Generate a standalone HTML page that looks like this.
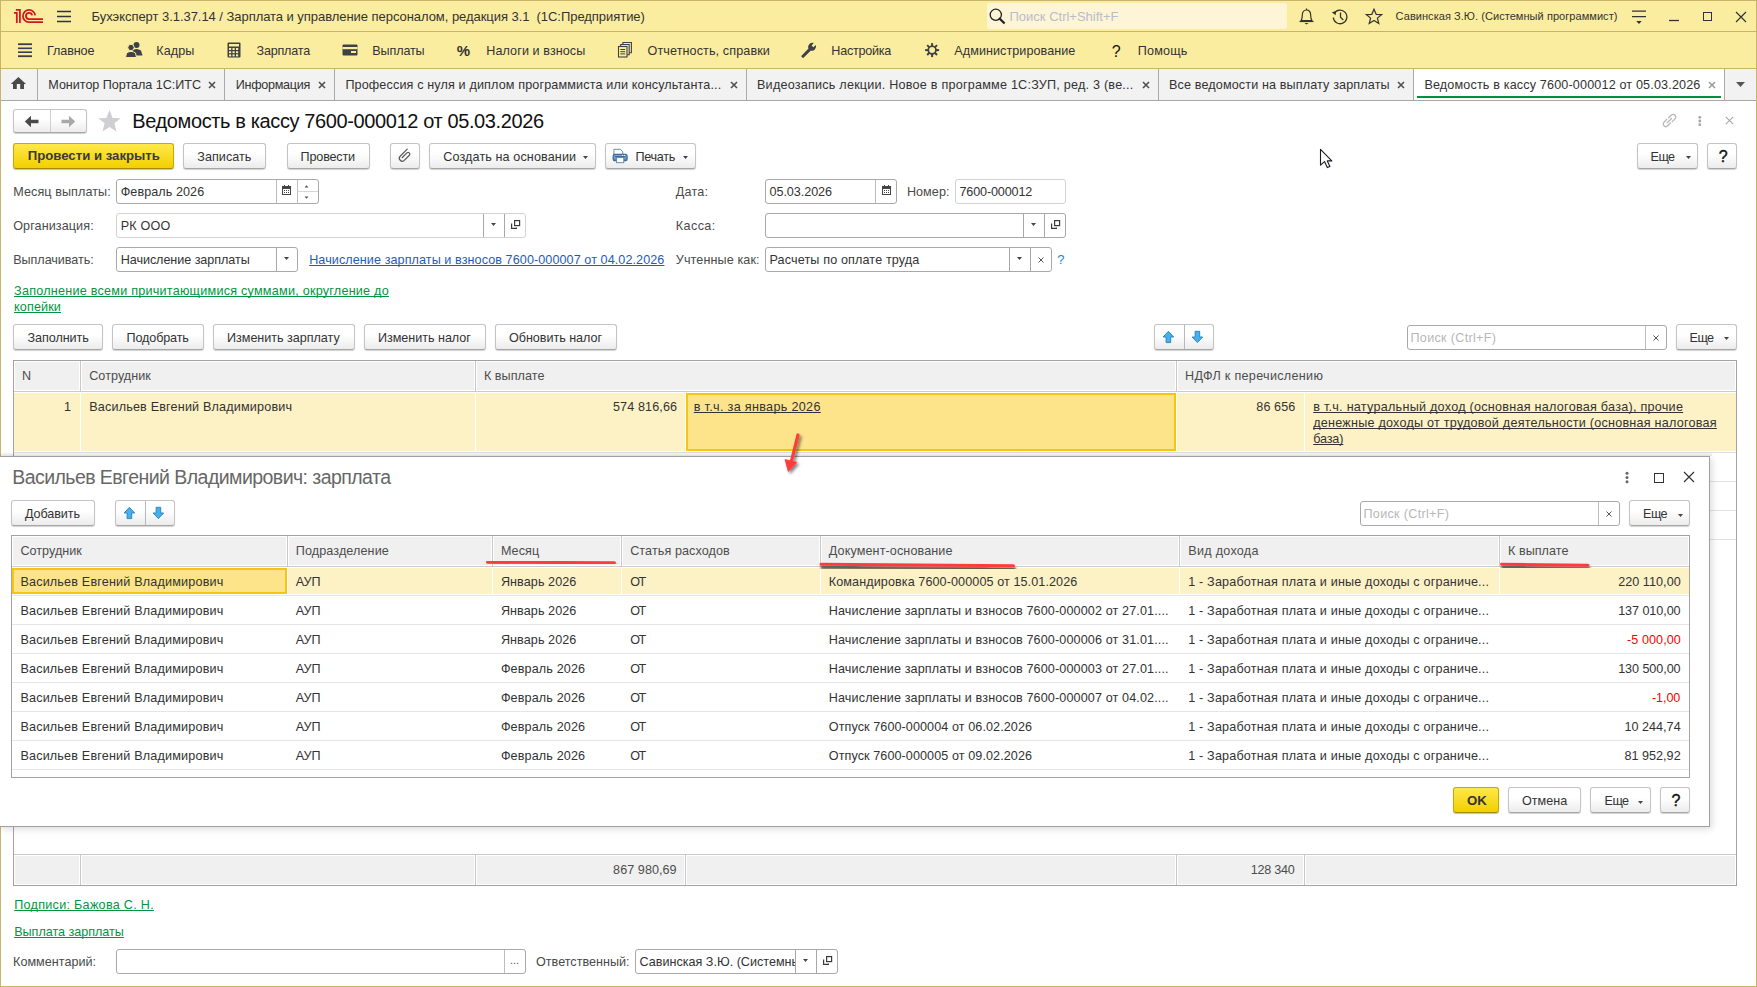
<!DOCTYPE html><html><head><meta charset="utf-8"><style>
html,body{margin:0;padding:0;width:1757px;height:987px;overflow:hidden;background:#fff;position:relative;font-family:"Liberation Sans",sans-serif;}
.a{position:absolute;display:block}
.t{position:absolute;white-space:pre;font-family:"Liberation Sans",sans-serif;}
</style></head><body>
<div class="a" style="left:0px;top:0px;width:1757px;height:32px;background:#fbeda0;"></div>
<div class="a" style="left:0px;top:32px;width:1757px;height:37px;background:#fbeda0;"></div>
<div class="a" style="left:0px;top:31px;width:1757px;height:1px;background:#c8b56b;"></div>
<div class="a" style="left:0px;top:68px;width:1757px;height:1px;background:#c8b56b;"></div>
<div class="a" style="left:0px;top:69px;width:1757px;height:31px;background:#f2f2f2;"></div>
<div class="a" style="left:0px;top:100px;width:1757px;height:1px;background:#a8a8a8;"></div>
<svg class="a" style="left:10px;top:5px;" width="36" height="22" viewBox="0 0 36 22"><g fill="none" stroke="#d5141c" stroke-width="1.75"><path d="M4 7.9H6.8V17.9"/><path d="M5.9 4.9H9.9V17.9"/><path d="M25.1 10.4A6.1 6.1 0 1 0 18.9 17.1H33"/><path d="M22.1 10.4A3.1 3.1 0 1 0 18.9 14.1H33"/></g></svg>
<svg class="a" style="left:57px;top:10px;" width="15" height="13" viewBox="0 0 15 13"><g stroke="#333" stroke-width="1.3"><path d="M0 1.5H14M0 6.5H14M0 11.5H14"/></g></svg>
<div class="t " style="left:91.50px;top:8.50px;font-size:13px;line-height:16px;color:#333;letter-spacing:-0.047px;">Бухэксперт 3.1.37.14 / Зарплата и управление персоналом, редакция 3.1  (1С:Предприятие)</div>
<div class="a" style="left:987px;top:3px;width:300px;height:26px;background:#fdf5d5;border-radius:3px;"></div>
<svg class="a" style="left:989px;top:8px;" width="17" height="17" viewBox="0 0 17 17"><circle cx="6.8" cy="6.8" r="5.6" fill="none" stroke="#222" stroke-width="1.3"/><path d="M10.8 10.8L14.8 14.8" stroke="#222" stroke-width="2.2" stroke-linecap="square"/></svg>
<div class="t " style="left:1009.50px;top:8.50px;font-size:13px;line-height:16px;color:#b9bccb;">Поиск Ctrl+Shift+F</div>
<svg class="a" style="left:1298px;top:8px;" width="17" height="17" viewBox="0 0 17 17"><path d="M3 12.5C4.2 11 4.3 9.5 4.3 7.3 4.3 4.2 6 2 8.5 2S12.7 4.2 12.7 7.3C12.7 9.5 12.8 11 14 12.5Z" fill="none" stroke="#333" stroke-width="1.2" stroke-linejoin="round"/><path d="M1.5 13.5H15.5" stroke="#333" stroke-width="1.2"/><path d="M6.5 15H10.5L8.5 16.5Z" fill="#333"/><path d="M8.5 0.5V2" stroke="#333" stroke-width="1.2"/></svg>
<svg class="a" style="left:1331px;top:8px;" width="18" height="17" viewBox="0 0 18 17"><path d="M3.2 5.5A6.8 6.8 0 1 1 2.3 9.5" fill="none" stroke="#333" stroke-width="1.3"/><path d="M0.8 4.2L4.6 7.2L5.2 3Z" fill="#333"/><path d="M9.5 4.5V9.3L12.3 12" fill="none" stroke="#333" stroke-width="1.3"/></svg>
<svg class="a" style="left:1365px;top:8px;" width="18" height="17" viewBox="0 0 18 17"><path d="M9 1.2L11.2 6.3L16.6 6.6L12.4 10.1L13.8 15.5L9 12.5L4.2 15.5L5.6 10.1L1.4 6.6L6.8 6.3Z" fill="none" stroke="#333" stroke-width="1.2" stroke-linejoin="miter"/></svg>
<div class="t " style="left:1395.60px;top:9.19px;font-size:11px;line-height:14px;color:#333;letter-spacing:0.054px;">Савинская З.Ю. (Системный программист)</div>
<svg class="a" style="left:1631px;top:10px;" width="16" height="15" viewBox="0 0 16 15"><path d="M1 1.2H15M1 6.6H15" stroke="#333" stroke-width="1.2"/><path d="M5.3 11H10.7L8 14Z" fill="#333"/></svg>
<svg class="a" style="left:1668px;top:17px;" width="12" height="6" viewBox="0 0 12 6"><path d="M1 3.5H11" stroke="#333" stroke-width="1.3"/></svg>
<div class="a" style="left:1703px;top:12px;width:9px;height:9px;border:1.2px solid #333;box-sizing:border-box;"></div>
<svg class="a" style="left:1735px;top:11px;" width="12" height="12" viewBox="0 0 12 12"><path d="M1 1L11 11M11 1L1 11" stroke="#333" stroke-width="1.2"/></svg>
<svg class="a" style="left:17px;top:42px;" width="16" height="16" viewBox="0 0 16 16"><g fill="#3b4048"><rect x="1" y="1.3" width="14" height="1.8"/><rect x="1" y="5.5" width="14" height="1.6"/><rect x="1" y="9.4" width="14" height="1.6"/><rect x="1" y="13.3" width="14" height="1.8"/></g></svg>
<div class="t " style="left:47.00px;top:42.63px;font-size:12.6px;line-height:16px;color:#333;letter-spacing:-0.100px;">Главное</div>
<svg class="a" style="left:125px;top:41px;" width="19" height="17" viewBox="0 0 19 17"><g fill="#3e4147"><circle cx="11.5" cy="4" r="3"/><path d="M7 9.5Q11.5 6.5 16 9.5L17.5 14.5H8Z"/><circle cx="6" cy="6.5" r="3.2" stroke="#fbeda0" stroke-width="1"/><path d="M0.5 16.5L1.5 12Q6 8.8 10.5 12L11.5 16.5Z" stroke="#fbeda0" stroke-width="1"/></g></svg>
<div class="t " style="left:156.30px;top:42.63px;font-size:12.6px;line-height:16px;color:#333;letter-spacing:0.050px;">Кадры</div>
<svg class="a" style="left:227px;top:42px;" width="14" height="16" viewBox="0 0 14 16"><rect x="0.5" y="0.5" width="13" height="15" rx="1" fill="#3e4147"/><rect x="2" y="2" width="10" height="2.5" fill="#fbeda0"/><rect x="2.0" y="6.0" width="2.2" height="2" fill="#fbeda0"/><rect x="2.0" y="9.2" width="2.2" height="2" fill="#fbeda0"/><rect x="2.0" y="12.4" width="2.2" height="2" fill="#fbeda0"/><rect x="5.5" y="6.0" width="2.2" height="2" fill="#fbeda0"/><rect x="5.5" y="9.2" width="2.2" height="2" fill="#fbeda0"/><rect x="5.5" y="12.4" width="2.2" height="2" fill="#fbeda0"/><rect x="9.0" y="6.0" width="2.2" height="2" fill="#fbeda0"/><rect x="9.0" y="9.2" width="2.2" height="2" fill="#fbeda0"/><rect x="9.0" y="12.4" width="2.2" height="2" fill="#fbeda0"/></svg>
<div class="t " style="left:256.50px;top:42.63px;font-size:12.6px;line-height:16px;color:#333;letter-spacing:-0.214px;">Зарплата</div>
<svg class="a" style="left:342px;top:44px;" width="16" height="12" viewBox="0 0 16 12"><rect x="0.5" y="0.5" width="15" height="11" rx="1" fill="#3e4147"/><rect x="0.5" y="3" width="15" height="2.2" fill="#fbeda0"/><rect x="9" y="7" width="5" height="2" fill="#fbeda0"/></svg>
<div class="t " style="left:372.30px;top:42.63px;font-size:12.6px;line-height:16px;color:#333;letter-spacing:-0.133px;">Выплаты</div>
<div class="t " style="left:456.80px;top:40.80px;font-size:15px;line-height:19px;color:#333;font-weight:bold;">%</div>
<div class="t " style="left:486.30px;top:42.63px;font-size:12.6px;line-height:16px;color:#333;letter-spacing:0.079px;">Налоги и взносы</div>
<svg class="a" style="left:617px;top:41px;" width="16" height="17" viewBox="0 0 16 17"><g fill="none" stroke="#3e4147" stroke-width="1.1"><rect x="1.5" y="5.5" width="8.5" height="10.5"/><path d="M3.7 5.5V3.5H12.2V13.8H10"/><path d="M5.9 3.5V1.5H14.4V11.8H12.2"/></g><g stroke="#3e4147" stroke-width="1"><path d="M3.3 8.5H8.2M3.3 10.7H8.2M3.3 12.9H8.2"/></g></svg>
<div class="t " style="left:647.50px;top:42.63px;font-size:12.6px;line-height:16px;color:#333;letter-spacing:0.106px;">Отчетность, справки</div>
<svg class="a" style="left:801px;top:42px;" width="16" height="16" viewBox="0 0 16 16"><path d="M2 14.2L8.3 7.9" stroke="#3e4147" stroke-width="3" stroke-linecap="round"/><path d="M7.2 6.2A4.3 4.3 0 0 1 12.8 1.1L10.6 3.6L12.3 5.3L14.8 3.1A4.3 4.3 0 0 1 9.7 8.7Z" fill="#3e4147"/></svg>
<div class="t " style="left:831.30px;top:42.63px;font-size:12.6px;line-height:16px;color:#333;letter-spacing:-0.250px;">Настройка</div>
<svg class="a" style="left:924px;top:42px;" width="17" height="17" viewBox="0 0 17 17"><g transform="translate(8.1,8.1)" fill="#3e4147"><rect x="-1" y="-7" width="2" height="3.5" transform="rotate(0)"/><rect x="-1" y="-7" width="2" height="3.5" transform="rotate(45)"/><rect x="-1" y="-7" width="2" height="3.5" transform="rotate(90)"/><rect x="-1" y="-7" width="2" height="3.5" transform="rotate(135)"/><rect x="-1" y="-7" width="2" height="3.5" transform="rotate(180)"/><rect x="-1" y="-7" width="2" height="3.5" transform="rotate(225)"/><rect x="-1" y="-7" width="2" height="3.5" transform="rotate(270)"/><rect x="-1" y="-7" width="2" height="3.5" transform="rotate(315)"/><circle r="3.85" fill="none" stroke="#3e4147" stroke-width="1.7"/></g></svg>
<div class="t " style="left:954.30px;top:42.63px;font-size:12.6px;line-height:16px;color:#333;letter-spacing:0.062px;">Администрирование</div>
<div class="t " style="left:1111.70px;top:41.76px;font-size:16px;line-height:20px;color:#111;">?</div>
<div class="t " style="left:1137.70px;top:42.63px;font-size:12.6px;line-height:16px;color:#333;letter-spacing:0.200px;">Помощь</div>
<div class="a" style="left:37px;top:69px;width:1px;height:31px;background:#aaaaaa;"></div>
<div class="a" style="left:224px;top:69px;width:1px;height:31px;background:#aaaaaa;"></div>
<div class="a" style="left:334px;top:69px;width:1px;height:31px;background:#aaaaaa;"></div>
<div class="a" style="left:746px;top:69px;width:1px;height:31px;background:#aaaaaa;"></div>
<div class="a" style="left:1158px;top:69px;width:1px;height:31px;background:#aaaaaa;"></div>
<div class="a" style="left:1413px;top:69px;width:1px;height:31px;background:#aaaaaa;"></div>
<div class="a" style="left:1724px;top:69px;width:1px;height:31px;background:#aaaaaa;"></div>
<div class="a" style="left:1414px;top:69px;width:310px;height:31px;background:#fff;"></div>
<div class="a" style="left:1417px;top:96px;width:304px;height:2px;background:#00923f;"></div>
<svg class="a" style="left:10px;top:76px;" width="17" height="14" viewBox="0 0 17 14"><path d="M8.4 1L16 8H14V13H10.2V8H6.8V13H3V8H0.8Z" fill="#4a4a4a"/></svg>
<div class="t " style="left:48.30px;top:76.63px;font-size:12.6px;line-height:16px;color:#333;letter-spacing:-0.033px;">Монитор Портала 1С:ИТС</div>
<svg class="a" style="left:208px;top:81px;" width="8" height="8" viewBox="0 0 8 8"><path d="M1 1L7 7M7 1L1 7" stroke="#505050" stroke-width="1.6"/></svg>
<div class="t " style="left:235.70px;top:76.63px;font-size:12.6px;line-height:16px;color:#333;letter-spacing:-0.267px;">Информация</div>
<svg class="a" style="left:318px;top:81px;" width="8" height="8" viewBox="0 0 8 8"><path d="M1 1L7 7M7 1L1 7" stroke="#505050" stroke-width="1.6"/></svg>
<div class="t " style="left:345.40px;top:76.63px;font-size:12.6px;line-height:16px;color:#333;letter-spacing:0.140px;">Профессия с нуля и диплом программиста или консультанта...</div>
<svg class="a" style="left:730px;top:81px;" width="8" height="8" viewBox="0 0 8 8"><path d="M1 1L7 7M7 1L1 7" stroke="#505050" stroke-width="1.6"/></svg>
<div class="t " style="left:757.00px;top:76.63px;font-size:12.6px;line-height:16px;color:#333;letter-spacing:0.224px;">Видеозапись лекции. Новое в программе 1С:ЗУП, ред. 3 (ве...</div>
<svg class="a" style="left:1142px;top:81px;" width="8" height="8" viewBox="0 0 8 8"><path d="M1 1L7 7M7 1L1 7" stroke="#505050" stroke-width="1.6"/></svg>
<div class="t " style="left:1169.00px;top:76.63px;font-size:12.6px;line-height:16px;color:#333;letter-spacing:0.131px;">Все ведомости на выплату зарплаты</div>
<svg class="a" style="left:1397px;top:81px;" width="8" height="8" viewBox="0 0 8 8"><path d="M1 1L7 7M7 1L1 7" stroke="#505050" stroke-width="1.6"/></svg>
<div class="t " style="left:1424.40px;top:76.63px;font-size:12.6px;line-height:16px;color:#333;letter-spacing:0.157px;">Ведомость в кассу 7600-000012 от 05.03.2026</div>
<svg class="a" style="left:1708px;top:81px;" width="8" height="8" viewBox="0 0 8 8"><path d="M1 1L7 7M7 1L1 7" stroke="#9a9a9a" stroke-width="1.5"/></svg>
<svg class="a" style="left:1736px;top:82px;" width="9" height="5" viewBox="0 0 9 5"><path d="M0 0H9L4.5 5Z" fill="#555"/></svg>
<div class="a" style="left:0px;top:0px;width:1757px;height:1px;background:#c8b56b;"></div>
<div class="a" style="left:0px;top:986px;width:1757px;height:1px;background:#c8b56b;"></div>
<div class="a" style="left:0px;top:0px;width:1px;height:987px;background:#c8b56b;"></div>
<div class="a" style="left:1756px;top:0px;width:1px;height:987px;background:#c8b56b;"></div>
<div class="a" style="left:13px;top:109px;width:74px;height:24px;background:linear-gradient(#ffffff 40%,#ececec);border:1px solid #c4c4c4;border-bottom-color:#a6a6a6;border-radius:3px;box-shadow:0 1px 1px rgba(0,0,0,.18);box-sizing:border-box;"></div>
<div class="a" style="left:50px;top:110px;width:1px;height:22px;background:#d0d0d0;"></div>
<svg class="a" style="left:24px;top:115px;" width="16" height="13" viewBox="0 0 16 13"><path d="M0.8 6.5L7 0.8V4.8H14.5V8.2H7V12.2Z" fill="#4a4a4a"/></svg>
<svg class="a" style="left:60px;top:115px;" width="16" height="13" viewBox="0 0 16 13"><path d="M15.2 6.5L9 0.8V4.8H1.5V8.2H9V12.2Z" fill="#a9a9a9"/></svg>
<svg class="a" style="left:97px;top:109px;" width="25" height="24" viewBox="0 0 25 24"><path d="M12.5 1L15.6 8.9L23.7 9.2L17.4 14.3L19.5 22.5L12.5 17.9L5.5 22.5L7.6 14.3L1.3 9.2L9.4 8.9Z" fill="#cfcfd2"/></svg>
<div class="t " style="left:132.30px;top:108.57px;font-size:20px;line-height:25px;color:#111;letter-spacing:-0.381px;">Ведомость в кассу 7600-000012 от 05.03.2026</div>
<svg class="a" style="left:1661px;top:112px;" width="17" height="17" viewBox="0 0 17 17"><g fill="none" stroke="#b8b8b8" stroke-width="1.3"><path d="M7.2 6.3L10.3 3.2A2.6 2.6 0 0 1 14 6.9L10.9 10"/><path d="M9.8 10.7L6.7 13.8A2.6 2.6 0 0 1 3 10.1L6.1 7"/><path d="M6 11L11 6"/></g></svg>
<svg class="a" style="left:1697px;top:115px;" width="6" height="12" viewBox="0 0 6 12"><g fill="#a6a6a6"><circle cx="2.8" cy="2.3" r="1.4"/><circle cx="2.8" cy="6" r="1.4"/><circle cx="2.8" cy="9.7" r="1.4"/></g></svg>
<svg class="a" style="left:1725px;top:116px;" width="9" height="9" viewBox="0 0 9 9"><path d="M0.8 0.8L8.2 8.2M8.2 0.8L0.8 8.2" stroke="#a8a8a8" stroke-width="1.1"/></svg>
<div class="a" style="left:13px;top:143px;width:161px;height:26px;background:linear-gradient(#ffe84a,#f2d000);border:1px solid #c9a900;border-bottom-color:#a88c00;border-radius:3px;box-shadow:0 1px 1px rgba(0,0,0,.25);box-sizing:border-box;"></div>
<div class="t " style="left:27.70px;top:148.43px;font-size:13.2px;line-height:16px;color:#3a3a3a;font-weight:bold;">Провести и закрыть</div>
<div class="a" style="left:183px;top:143px;width:83px;height:26px;background:linear-gradient(#ffffff 40%,#ececec);border:1px solid #c4c4c4;border-bottom-color:#a6a6a6;border-radius:3px;box-shadow:0 1px 1px rgba(0,0,0,.18);box-sizing:border-box;"></div>
<div class="t " style="left:197.30px;top:148.63px;font-size:12.6px;line-height:16px;color:#333;letter-spacing:0.029px;">Записать</div>
<div class="a" style="left:287px;top:143px;width:83px;height:26px;background:linear-gradient(#ffffff 40%,#ececec);border:1px solid #c4c4c4;border-bottom-color:#a6a6a6;border-radius:3px;box-shadow:0 1px 1px rgba(0,0,0,.18);box-sizing:border-box;"></div>
<div class="t " style="left:300.60px;top:148.63px;font-size:12.6px;line-height:16px;color:#333;letter-spacing:-0.171px;">Провести</div>
<div class="a" style="left:390px;top:143px;width:30px;height:26px;background:linear-gradient(#ffffff 40%,#ececec);border:1px solid #c4c4c4;border-bottom-color:#a6a6a6;border-radius:3px;box-shadow:0 1px 1px rgba(0,0,0,.18);box-sizing:border-box;"></div>
<svg class="a" style="left:397px;top:148px;" width="16" height="16" viewBox="0 0 16 16"><path d="M10.22 1.18L3.15 8.25A2.9 2.9 0 0 0 7.25 12.35L12.34 7.26A1.7 1.7 0 0 0 9.94 4.86L5.27 9.52" fill="none" stroke="#5a5a5a" stroke-width="1.25" stroke-linecap="round"/></svg>
<div class="a" style="left:429px;top:143px;width:167px;height:26px;background:linear-gradient(#ffffff 40%,#ececec);border:1px solid #c4c4c4;border-bottom-color:#a6a6a6;border-radius:3px;box-shadow:0 1px 1px rgba(0,0,0,.18);box-sizing:border-box;"></div>
<div class="t " style="left:443.30px;top:148.63px;font-size:12.6px;line-height:16px;color:#333;letter-spacing:0.111px;">Создать на основании</div>
<svg class="a" style="left:583.3px;top:156.3px;" width="5" height="3" viewBox="0 0 5 3"><path d="M0 0H5L2.5 3Z" fill="#444"/></svg>
<div class="a" style="left:605px;top:143px;width:91px;height:26px;background:linear-gradient(#ffffff 40%,#ececec);border:1px solid #c4c4c4;border-bottom-color:#a6a6a6;border-radius:3px;box-shadow:0 1px 1px rgba(0,0,0,.18);box-sizing:border-box;"></div>
<svg class="a" style="left:612px;top:148px;" width="17" height="16" viewBox="0 0 17 16"><defs><linearGradient id="pg" x1="0" y1="0" x2="0" y2="1"><stop offset="0" stop-color="#9dbde0"/><stop offset="1" stop-color="#4a7fb6"/></linearGradient></defs><path d="M1.9 1.3H8.4L10.8 3.7V6.5H1.9Z" fill="#fff" stroke="#5b80a8" stroke-width="0.9"/><rect x="1.2" y="6.3" width="13.9" height="6.4" rx="1.6" fill="url(#pg)" stroke="#3a6898" stroke-width="1.2"/><path d="M2.6 8.4H13.7" stroke="#2f5b88" stroke-width="0.9"/><circle cx="10.6" cy="7.4" r="0.55" fill="#fff"/><circle cx="12.6" cy="7.4" r="0.55" fill="#fff"/><rect x="4.6" y="9.6" width="7.2" height="5.1" fill="#fff" stroke="#5b80a8" stroke-width="0.9"/></svg>
<div class="t " style="left:635.40px;top:148.63px;font-size:12.6px;line-height:16px;color:#333;letter-spacing:-0.280px;">Печать</div>
<svg class="a" style="left:683.3px;top:156.3px;" width="5" height="3" viewBox="0 0 5 3"><path d="M0 0H5L2.5 3Z" fill="#444"/></svg>
<div class="a" style="left:1637px;top:143px;width:61px;height:26px;background:linear-gradient(#ffffff 40%,#ececec);border:1px solid #c4c4c4;border-bottom-color:#a6a6a6;border-radius:3px;box-shadow:0 1px 1px rgba(0,0,0,.18);box-sizing:border-box;"></div>
<div class="t " style="left:1650.50px;top:148.63px;font-size:12.6px;line-height:16px;color:#333;letter-spacing:-0.500px;">Еще</div>
<svg class="a" style="left:1685.5px;top:156.3px;" width="5" height="3" viewBox="0 0 5 3"><path d="M0 0H5L2.5 3Z" fill="#444"/></svg>
<div class="a" style="left:1707px;top:143px;width:30px;height:26px;background:linear-gradient(#ffffff 40%,#ececec);border:1px solid #c4c4c4;border-bottom-color:#a6a6a6;border-radius:3px;box-shadow:0 1px 1px rgba(0,0,0,.18);box-sizing:border-box;"></div>
<div class="t " style="left:1718.70px;top:146.76px;font-size:16px;line-height:20px;color:#111;-webkit-text-stroke:0.4px #111;">?</div>
<svg class="a" style="left:1319px;top:148px;" width="15" height="22" viewBox="0 0 15 22"><path d="M1.5 1.3L1.5 17.2L5.5 13.6L8.3 19.6L10.9 18.5L8.3 12.9L12.8 12.9Z" fill="#fff" stroke="#1a1a22" stroke-width="1.1" stroke-linejoin="round"/></svg>
<div class="t " style="left:13.20px;top:183.63px;font-size:12.6px;line-height:16px;color:#4a4a4a;letter-spacing:0.085px;">Месяц выплаты:</div>
<div class="a" style="left:116px;top:179px;width:203px;height:25px;background:#fff;border:1px solid #a9a9a9;border-radius:3px;box-sizing:border-box;"></div>
<div class="a" style="left:276px;top:180px;width:1px;height:23px;background:#bdbdbd;"></div>
<div class="a" style="left:297px;top:180px;width:1px;height:23px;background:#bdbdbd;"></div>
<div class="a" style="left:297px;top:191px;width:21px;height:1px;background:#d5d5d5;"></div>
<svg class="a" style="left:280px;top:184px;" width="12" height="12" viewBox="0 0 12 12"><g shape-rendering="crispEdges"><rect x="2" y="2" width="9" height="9" fill="#444"/><rect x="3" y="5" width="7" height="5" fill="#fff"/><g fill="#444"><rect x="4" y="6" width="1" height="1"/><rect x="6" y="6" width="1" height="1"/><rect x="8" y="6" width="1" height="1"/><rect x="4" y="8" width="1" height="1"/><rect x="6" y="8" width="1" height="1"/><rect x="8" y="8" width="1" height="1"/></g><rect x="4" y="1" width="1" height="1" fill="#444"/><rect x="8" y="1" width="1" height="1" fill="#444"/></g></svg>
<svg class="a" style="left:304px;top:185px;" width="5" height="3" viewBox="0 0 5 3"><path d="M0.5 2.5H4.5L2.5 0.3Z" fill="#555"/></svg>
<svg class="a" style="left:304px;top:196px;" width="5" height="3" viewBox="0 0 5 3"><path d="M0.5 0.5H4.5L2.5 2.7Z" fill="#555"/></svg>
<div class="t " style="left:120.70px;top:183.63px;font-size:12.6px;line-height:16px;color:#333;letter-spacing:0.073px;">Февраль 2026</div>
<div class="t " style="left:13.20px;top:217.63px;font-size:12.6px;line-height:16px;color:#4a4a4a;letter-spacing:0.091px;">Организация:</div>
<div class="a" style="left:116px;top:213px;width:410px;height:25px;background:#fff;border:1px solid #d3d3d3;border-radius:3px;box-sizing:border-box;"></div>
<div class="a" style="left:483px;top:214px;width:1px;height:23px;background:#a8a8a8;"></div>
<div class="a" style="left:504px;top:214px;width:1px;height:23px;background:#a8a8a8;"></div>
<svg class="a" style="left:491px;top:223px;" width="5" height="3" viewBox="0 0 5 3"><path d="M0 0H5L2.5 3Z" fill="#444"/></svg>
<svg class="a" style="left:510px;top:219px;" width="11" height="11" viewBox="0 0 11 11"><path d="M1.6 4.6V9.4H6.4V8.6" fill="none" stroke="#3a3a3a" stroke-width="1.2"/><rect x="4.6" y="1.6" width="5" height="5" fill="none" stroke="#3a3a3a" stroke-width="1.2"/></svg>
<div class="t " style="left:120.70px;top:217.63px;font-size:12.6px;line-height:16px;color:#333;letter-spacing:0.200px;">РК ООО</div>
<div class="t " style="left:13.20px;top:251.63px;font-size:12.6px;line-height:16px;color:#4a4a4a;letter-spacing:-0.045px;">Выплачивать:</div>
<div class="a" style="left:116px;top:247px;width:182px;height:25px;background:#fff;border:1px solid #a9a9a9;border-radius:3px;box-sizing:border-box;"></div>
<div class="a" style="left:276px;top:248px;width:1px;height:23px;background:#a8a8a8;"></div>
<svg class="a" style="left:284px;top:257px;" width="5" height="3" viewBox="0 0 5 3"><path d="M0 0H5L2.5 3Z" fill="#444"/></svg>
<div class="t " style="left:120.70px;top:251.63px;font-size:12.6px;line-height:16px;color:#333;letter-spacing:-0.056px;">Начисление зарплаты</div>
<div class="t " style="left:309.20px;top:251.63px;font-size:12.6px;line-height:16px;color:#1f5cb8;letter-spacing:0.081px;text-decoration:underline;text-decoration-skip-ink:none;">Начисление зарплаты и взносов 7600-000007 от 04.02.2026</div>
<div class="t " style="left:675.80px;top:183.63px;font-size:12.6px;line-height:16px;color:#4a4a4a;letter-spacing:0.200px;">Дата:</div>
<div class="a" style="left:765px;top:179px;width:132px;height:25px;background:#fff;border:1px solid #a9a9a9;border-radius:3px;box-sizing:border-box;"></div>
<div class="a" style="left:875px;top:180px;width:1px;height:23px;background:#bdbdbd;"></div>
<svg class="a" style="left:880px;top:184px;" width="12" height="12" viewBox="0 0 12 12"><g shape-rendering="crispEdges"><rect x="2" y="2" width="9" height="9" fill="#444"/><rect x="3" y="5" width="7" height="5" fill="#fff"/><g fill="#444"><rect x="4" y="6" width="1" height="1"/><rect x="6" y="6" width="1" height="1"/><rect x="8" y="6" width="1" height="1"/><rect x="4" y="8" width="1" height="1"/><rect x="6" y="8" width="1" height="1"/><rect x="8" y="8" width="1" height="1"/></g><rect x="4" y="1" width="1" height="1" fill="#444"/><rect x="8" y="1" width="1" height="1" fill="#444"/></g></svg>
<div class="t " style="left:769.50px;top:183.63px;font-size:12.6px;line-height:16px;color:#333;letter-spacing:-0.056px;">05.03.2026</div>
<div class="t " style="left:906.90px;top:183.63px;font-size:12.6px;line-height:16px;color:#4a4a4a;letter-spacing:0.060px;">Номер:</div>
<div class="a" style="left:955px;top:179px;width:111px;height:25px;background:#fff;border:1px solid #d3d3d3;border-radius:3px;box-sizing:border-box;"></div>
<div class="t " style="left:959.50px;top:183.63px;font-size:12.6px;line-height:16px;color:#333;letter-spacing:-0.150px;">7600-000012</div>
<div class="t " style="left:675.80px;top:217.63px;font-size:12.6px;line-height:16px;color:#4a4a4a;letter-spacing:0.400px;">Касса:</div>
<div class="a" style="left:765px;top:213px;width:301px;height:25px;background:#fff;border:1px solid #a9a9a9;border-radius:3px;box-sizing:border-box;"></div>
<div class="a" style="left:1023px;top:214px;width:1px;height:23px;background:#a8a8a8;"></div>
<div class="a" style="left:1044px;top:214px;width:1px;height:23px;background:#a8a8a8;"></div>
<svg class="a" style="left:1031px;top:223px;" width="5" height="3" viewBox="0 0 5 3"><path d="M0 0H5L2.5 3Z" fill="#444"/></svg>
<svg class="a" style="left:1050px;top:219px;" width="11" height="11" viewBox="0 0 11 11"><path d="M1.6 4.6V9.4H6.4V8.6" fill="none" stroke="#3a3a3a" stroke-width="1.2"/><rect x="4.6" y="1.6" width="5" height="5" fill="none" stroke="#3a3a3a" stroke-width="1.2"/></svg>
<div class="t " style="left:675.80px;top:251.63px;font-size:12.6px;line-height:16px;color:#4a4a4a;letter-spacing:0.108px;">Учтенные как:</div>
<div class="a" style="left:765px;top:247px;width:287px;height:25px;background:#fff;border:1px solid #a9a9a9;border-radius:3px;box-sizing:border-box;"></div>
<div class="a" style="left:1009px;top:248px;width:1px;height:23px;background:#a8a8a8;"></div>
<div class="a" style="left:1030px;top:248px;width:1px;height:23px;background:#a8a8a8;"></div>
<svg class="a" style="left:1017px;top:257px;" width="5" height="3" viewBox="0 0 5 3"><path d="M0 0H5L2.5 3Z" fill="#444"/></svg>
<svg class="a" style="left:1037px;top:256px;" width="8" height="8" viewBox="0 0 8 8"><path d="M1.5 1.5L6.5 6.5M6.5 1.5L1.5 6.5" stroke="#555" stroke-width="1"/></svg>
<div class="t " style="left:769.50px;top:251.63px;font-size:12.6px;line-height:16px;color:#333;letter-spacing:0.136px;">Расчеты по оплате труда</div>
<div class="t " style="left:1057.30px;top:251.50px;font-size:13px;line-height:16px;color:#1a82cf;">?</div>
<div class="t " style="left:14.10px;top:282.63px;font-size:12.6px;line-height:16px;color:#00963f;letter-spacing:0.240px;text-decoration:underline;text-decoration-skip-ink:none;">Заполнение всеми причитающимися суммами, округление до</div>
<div class="t " style="left:14.10px;top:298.63px;font-size:12.6px;line-height:16px;color:#00963f;letter-spacing:0.117px;text-decoration:underline;text-decoration-skip-ink:none;">копейки</div>
<div class="a" style="left:13px;top:324px;width:90px;height:26px;background:linear-gradient(#ffffff 40%,#ececec);border:1px solid #c4c4c4;border-bottom-color:#a6a6a6;border-radius:3px;box-shadow:0 1px 1px rgba(0,0,0,.18);box-sizing:border-box;"></div>
<div class="t " style="left:27.50px;top:329.63px;font-size:12.6px;line-height:16px;color:#333;letter-spacing:-0.062px;">Заполнить</div>
<div class="a" style="left:112px;top:324px;width:92px;height:26px;background:linear-gradient(#ffffff 40%,#ececec);border:1px solid #c4c4c4;border-bottom-color:#a6a6a6;border-radius:3px;box-shadow:0 1px 1px rgba(0,0,0,.18);box-sizing:border-box;"></div>
<div class="t " style="left:126.50px;top:329.63px;font-size:12.6px;line-height:16px;color:#333;letter-spacing:-0.125px;">Подобрать</div>
<div class="a" style="left:213px;top:324px;width:142px;height:26px;background:linear-gradient(#ffffff 40%,#ececec);border:1px solid #c4c4c4;border-bottom-color:#a6a6a6;border-radius:3px;box-shadow:0 1px 1px rgba(0,0,0,.18);box-sizing:border-box;"></div>
<div class="t " style="left:227.00px;top:329.63px;font-size:12.6px;line-height:16px;color:#333;letter-spacing:-0.031px;">Изменить зарплату</div>
<div class="a" style="left:364px;top:324px;width:122px;height:26px;background:linear-gradient(#ffffff 40%,#ececec);border:1px solid #c4c4c4;border-bottom-color:#a6a6a6;border-radius:3px;box-shadow:0 1px 1px rgba(0,0,0,.18);box-sizing:border-box;"></div>
<div class="t " style="left:378.00px;top:329.63px;font-size:12.6px;line-height:16px;color:#333;letter-spacing:-0.038px;">Изменить налог</div>
<div class="a" style="left:495px;top:324px;width:122px;height:26px;background:linear-gradient(#ffffff 40%,#ececec);border:1px solid #c4c4c4;border-bottom-color:#a6a6a6;border-radius:3px;box-shadow:0 1px 1px rgba(0,0,0,.18);box-sizing:border-box;"></div>
<div class="t " style="left:509.00px;top:329.63px;font-size:12.6px;line-height:16px;color:#333;letter-spacing:-0.038px;">Обновить налог</div>
<div class="a" style="left:1154px;top:324px;width:60px;height:26px;background:linear-gradient(#ffffff 40%,#ececec);border:1px solid #c4c4c4;border-bottom-color:#a6a6a6;border-radius:3px;box-shadow:0 1px 1px rgba(0,0,0,.18);box-sizing:border-box;"></div>
<div class="a" style="left:1184px;top:325px;width:1px;height:24px;background:#b9b9b9;"></div>
<svg class="a" style="left:1154px;top:324px;" width="30" height="26" viewBox="0 0 30 26"><path d="M14.4 7.3L19.7 13H16.7V18.6H12.1V13H9.1Z" fill="#46b0ea" stroke="#2a7fbf" stroke-width="0.9" stroke-linejoin="miter"/></svg>
<svg class="a" style="left:1184px;top:324px;" width="30" height="26" viewBox="0 0 30 26"><path d="M11.1 7.3H15.7V13H18.7L13.4 18.6L8.1 13H11.1Z" fill="#46b0ea" stroke="#2a7fbf" stroke-width="0.9" stroke-linejoin="miter"/></svg>
<div class="a" style="left:1407px;top:325px;width:260px;height:25px;background:#fff;border:1px solid #a9a9a9;border-radius:3px;box-sizing:border-box;"></div>
<div class="a" style="left:1645px;top:326px;width:1px;height:23px;background:#bdbdbd;"></div>
<svg class="a" style="left:1652px;top:334px;" width="8" height="8" viewBox="0 0 8 8"><path d="M1.5 1.5L6.5 6.5M6.5 1.5L1.5 6.5" stroke="#555" stroke-width="1"/></svg>
<div class="t " style="left:1410.50px;top:329.93px;font-size:12.6px;line-height:16px;color:#b8b8b8;letter-spacing:0.308px;">Поиск (Ctrl+F)</div>
<div class="a" style="left:1676px;top:324px;width:61px;height:26px;background:linear-gradient(#ffffff 40%,#ececec);border:1px solid #c4c4c4;border-bottom-color:#a6a6a6;border-radius:3px;box-shadow:0 1px 1px rgba(0,0,0,.18);box-sizing:border-box;"></div>
<div class="t " style="left:1689.50px;top:329.63px;font-size:12.6px;line-height:16px;color:#333;letter-spacing:-0.500px;">Еще</div>
<svg class="a" style="left:1724px;top:337.3px;" width="5" height="3" viewBox="0 0 5 3"><path d="M0 0H5L2.5 3Z" fill="#444"/></svg>
<div class="a" style="left:13px;top:360px;width:1724px;height:526px;background:#fff;border:1px solid #a3a3a3;box-sizing:border-box;"></div>
<div class="a" style="left:14px;top:361px;width:66px;height:30px;background:#f0f0f0;border:1px solid #fff;box-sizing:border-box;"></div>
<div class="a" style="left:81px;top:361px;width:394px;height:30px;background:#f0f0f0;border:1px solid #fff;box-sizing:border-box;"></div>
<div class="a" style="left:476px;top:361px;width:700px;height:30px;background:#f0f0f0;border:1px solid #fff;box-sizing:border-box;"></div>
<div class="a" style="left:1177px;top:361px;width:559px;height:30px;background:#f0f0f0;border:1px solid #fff;box-sizing:border-box;"></div>
<div class="a" style="left:80px;top:361px;width:1px;height:30px;background:#c9c9c9;"></div>
<div class="a" style="left:475px;top:361px;width:1px;height:30px;background:#c9c9c9;"></div>
<div class="a" style="left:1176px;top:361px;width:1px;height:30px;background:#c9c9c9;"></div>
<div class="a" style="left:14px;top:391px;width:1722px;height:1px;background:#cbcbcb;"></div>
<div class="t " style="left:22.10px;top:367.63px;font-size:12.6px;line-height:16px;color:#4d4d4d;">N</div>
<div class="t " style="left:89.20px;top:367.63px;font-size:12.6px;line-height:16px;color:#4d4d4d;letter-spacing:0.062px;">Сотрудник</div>
<div class="t " style="left:483.90px;top:367.63px;font-size:12.6px;line-height:16px;color:#4d4d4d;letter-spacing:0.062px;">К выплате</div>
<div class="t " style="left:1185.00px;top:367.63px;font-size:12.6px;line-height:16px;color:#4d4d4d;letter-spacing:0.306px;">НДФЛ к перечислению</div>
<div class="a" style="left:14px;top:392px;width:1722px;height:60px;background:#fdf1c6;border:1px solid #fff;border-left:0;border-right:0;box-sizing:border-box;"></div>
<div class="a" style="left:80px;top:392px;width:1px;height:60px;background:#ffffff;"></div>
<div class="a" style="left:475px;top:392px;width:1px;height:60px;background:#ffffff;"></div>
<div class="a" style="left:685px;top:392px;width:1px;height:60px;background:#ffffff;"></div>
<div class="a" style="left:1176px;top:392px;width:1px;height:60px;background:#ffffff;"></div>
<div class="a" style="left:1304px;top:392px;width:1px;height:60px;background:#ffffff;"></div>
<div class="a" style="left:686px;top:393px;width:490px;height:58px;background:#fde48b;border:2px solid #f6c511;box-sizing:border-box;"></div>
<div class="t " style="left:64.00px;top:398.63px;font-size:12.6px;line-height:16px;color:#333;">1</div>
<div class="t " style="left:89.20px;top:398.63px;font-size:12.6px;line-height:16px;color:#333;letter-spacing:0.179px;">Васильев Евгений Владимирович</div>
<div class="t " style="left:613.00px;top:398.63px;font-size:12.6px;line-height:16px;color:#333;letter-spacing:0.111px;">574 816,66</div>
<div class="t " style="left:693.80px;top:398.63px;font-size:12.6px;line-height:16px;color:#333;letter-spacing:0.315px;text-decoration:underline;text-decoration-skip-ink:none;">в т.ч. за январь 2026</div>
<div class="t " style="left:1256.30px;top:398.63px;font-size:12.6px;line-height:16px;color:#333;letter-spacing:0.100px;">86 656</div>
<div class="t " style="left:1313.20px;top:398.63px;font-size:12.6px;line-height:16px;color:#333;letter-spacing:0.263px;text-decoration:underline;text-decoration-skip-ink:none;">в т.ч. натуральный доход (основная налоговая база), прочие</div>
<div class="t " style="left:1313.20px;top:414.63px;font-size:12.6px;line-height:16px;color:#333;letter-spacing:0.237px;text-decoration:underline;text-decoration-skip-ink:none;">денежные доходы от трудовой деятельности (основная налоговая</div>
<div class="t " style="left:1313.20px;top:430.63px;font-size:12.6px;line-height:16px;color:#333;letter-spacing:-0.125px;text-decoration:underline;text-decoration-skip-ink:none;">база)</div>
<div class="a" style="left:14px;top:452px;width:1722px;height:1px;background:#dedede;"></div>
<div class="a" style="left:14px;top:481px;width:1722px;height:1px;background:#e2e2e2;"></div>
<div class="a" style="left:14px;top:510px;width:1722px;height:1px;background:#e2e2e2;"></div>
<div class="a" style="left:14px;top:539px;width:1722px;height:1px;background:#e2e2e2;"></div>
<div class="a" style="left:14px;top:854px;width:1722px;height:1px;background:#c9c9c9;"></div>
<div class="a" style="left:14px;top:855px;width:66px;height:30px;background:#f0f0f0;border:1px solid #fff;box-sizing:border-box;"></div>
<div class="a" style="left:81px;top:855px;width:394px;height:30px;background:#f0f0f0;border:1px solid #fff;box-sizing:border-box;"></div>
<div class="a" style="left:476px;top:855px;width:209px;height:30px;background:#f0f0f0;border:1px solid #fff;box-sizing:border-box;"></div>
<div class="a" style="left:686px;top:855px;width:490px;height:30px;background:#f0f0f0;border:1px solid #fff;box-sizing:border-box;"></div>
<div class="a" style="left:1177px;top:855px;width:127px;height:30px;background:#f0f0f0;border:1px solid #fff;box-sizing:border-box;"></div>
<div class="a" style="left:1305px;top:855px;width:431px;height:30px;background:#f0f0f0;border:1px solid #fff;box-sizing:border-box;"></div>
<div class="a" style="left:80px;top:855px;width:1px;height:30px;background:#c9c9c9;"></div>
<div class="a" style="left:475px;top:855px;width:1px;height:30px;background:#c9c9c9;"></div>
<div class="a" style="left:685px;top:855px;width:1px;height:30px;background:#c9c9c9;"></div>
<div class="a" style="left:1176px;top:855px;width:1px;height:30px;background:#c9c9c9;"></div>
<div class="a" style="left:1304px;top:855px;width:1px;height:30px;background:#c9c9c9;"></div>
<div class="t " style="left:613.10px;top:861.63px;font-size:12.6px;line-height:16px;color:#4d4d4d;letter-spacing:0.056px;">867 980,69</div>
<div class="t " style="left:1250.70px;top:861.63px;font-size:12.6px;line-height:16px;color:#4d4d4d;letter-spacing:-0.250px;">128 340</div>
<div class="t " style="left:14.20px;top:896.63px;font-size:12.6px;line-height:16px;color:#00963f;letter-spacing:0.285px;text-decoration:underline;text-decoration-skip-ink:none;">Подписи: Бажова С. Н.</div>
<div class="t " style="left:14.20px;top:923.63px;font-size:12.6px;line-height:16px;color:#00963f;letter-spacing:-0.020px;text-decoration:underline;text-decoration-skip-ink:none;">Выплата зарплаты</div>
<div class="t " style="left:13.10px;top:953.63px;font-size:12.6px;line-height:16px;color:#4a4a4a;letter-spacing:0.009px;">Комментарий:</div>
<div class="a" style="left:116px;top:949px;width:410px;height:25px;background:#fff;border:1px solid #a9a9a9;border-radius:3px;box-sizing:border-box;"></div>
<div class="a" style="left:504px;top:950px;width:1px;height:23px;background:#bdbdbd;"></div>
<div class="t " style="left:510.00px;top:953.19px;font-size:11px;line-height:14px;color:#555;">...</div>
<div class="t " style="left:536.00px;top:953.63px;font-size:12.6px;line-height:16px;color:#4a4a4a;letter-spacing:0.008px;">Ответственный:</div>
<div class="a" style="left:635px;top:949px;width:203px;height:25px;background:#fff;border:1px solid #a9a9a9;border-radius:3px;box-sizing:border-box;"></div>
<div class="a" style="left:636px;top:950px;width:159px;height:23px;overflow:hidden;">
<div class="t " style="left:3.50px;top:3.63px;font-size:12.6px;line-height:16px;color:#333;">Савинская З.Ю. (Системный программист)</div>
</div>
<div class="a" style="left:795px;top:950px;width:1px;height:23px;background:#a8a8a8;"></div>
<div class="a" style="left:816px;top:950px;width:1px;height:23px;background:#a8a8a8;"></div>
<svg class="a" style="left:803px;top:959px;" width="5" height="3" viewBox="0 0 5 3"><path d="M0 0H5L2.5 3Z" fill="#444"/></svg>
<svg class="a" style="left:822px;top:955px;" width="11" height="11" viewBox="0 0 11 11"><path d="M1.6 4.6V9.4H6.4V8.6" fill="none" stroke="#3a3a3a" stroke-width="1.2"/><rect x="4.6" y="1.6" width="5" height="5" fill="none" stroke="#3a3a3a" stroke-width="1.2"/></svg>
<div class="a" style="left:0px;top:452px;width:1712px;height:4px;background:linear-gradient(rgba(0,0,0,0),rgba(0,0,0,.09));"></div>
<div class="a" style="left:-1px;top:456px;width:1711px;height:371px;box-shadow:2px 2px 7px rgba(0,0,0,.14);background:#fff;border:1px solid #a0a0a0;box-sizing:border-box;"></div>
<div class="t " style="left:12.20px;top:465.24px;font-size:19.5px;line-height:24px;color:#676767;letter-spacing:-0.553px;">Васильев Евгений Владимирович: зарплата</div>
<svg class="a" style="left:1624px;top:471px;" width="6" height="13" viewBox="0 0 6 13"><g fill="#666"><circle cx="3" cy="2.3" r="1.5"/><circle cx="3" cy="6.5" r="1.5"/><circle cx="3" cy="10.7" r="1.5"/></g></svg>
<div class="a" style="left:1654px;top:473px;width:10px;height:10px;border:1.3px solid #333;box-sizing:border-box;"></div>
<svg class="a" style="left:1683px;top:471px;" width="12" height="12" viewBox="0 0 12 12"><path d="M1 1L11 11M11 1L1 11" stroke="#333" stroke-width="1.2"/></svg>
<div class="a" style="left:11px;top:500px;width:84px;height:26px;background:linear-gradient(#ffffff 40%,#ececec);border:1px solid #c4c4c4;border-bottom-color:#a6a6a6;border-radius:3px;box-shadow:0 1px 1px rgba(0,0,0,.18);box-sizing:border-box;"></div>
<div class="t " style="left:25.00px;top:505.63px;font-size:12.6px;line-height:16px;color:#333;letter-spacing:-0.086px;">Добавить</div>
<div class="a" style="left:115px;top:500px;width:60px;height:26px;background:linear-gradient(#ffffff 40%,#ececec);border:1px solid #c4c4c4;border-bottom-color:#a6a6a6;border-radius:3px;box-shadow:0 1px 1px rgba(0,0,0,.18);box-sizing:border-box;"></div>
<div class="a" style="left:145px;top:501px;width:1px;height:24px;background:#b9b9b9;"></div>
<svg class="a" style="left:115px;top:500px;" width="30" height="26" viewBox="0 0 30 26"><path d="M14.4 7.3L19.7 13H16.7V18.6H12.1V13H9.1Z" fill="#46b0ea" stroke="#2a7fbf" stroke-width="0.9" stroke-linejoin="miter"/></svg>
<svg class="a" style="left:145px;top:500px;" width="30" height="26" viewBox="0 0 30 26"><path d="M11.1 7.3H15.7V13H18.7L13.4 18.6L8.1 13H11.1Z" fill="#46b0ea" stroke="#2a7fbf" stroke-width="0.9" stroke-linejoin="miter"/></svg>
<div class="a" style="left:1360px;top:501px;width:260px;height:25px;background:#fff;border:1px solid #a9a9a9;border-radius:3px;box-sizing:border-box;"></div>
<div class="a" style="left:1598px;top:502px;width:1px;height:23px;background:#bdbdbd;"></div>
<svg class="a" style="left:1605px;top:510px;" width="8" height="8" viewBox="0 0 8 8"><path d="M1.5 1.5L6.5 6.5M6.5 1.5L1.5 6.5" stroke="#555" stroke-width="1"/></svg>
<div class="t " style="left:1363.50px;top:505.93px;font-size:12.6px;line-height:16px;color:#b8b8b8;letter-spacing:0.308px;">Поиск (Ctrl+F)</div>
<div class="a" style="left:1629px;top:500px;width:61px;height:26px;background:linear-gradient(#ffffff 40%,#ececec);border:1px solid #c4c4c4;border-bottom-color:#a6a6a6;border-radius:3px;box-shadow:0 1px 1px rgba(0,0,0,.18);box-sizing:border-box;"></div>
<div class="t " style="left:1643.00px;top:505.63px;font-size:12.6px;line-height:16px;color:#333;letter-spacing:-0.500px;">Еще</div>
<svg class="a" style="left:1677.5px;top:513.5px;" width="5" height="3" viewBox="0 0 5 3"><path d="M0 0H5L2.5 3Z" fill="#444"/></svg>
<div class="a" style="left:11px;top:535px;width:1679px;height:243px;background:#fff;border:1px solid #a3a3a3;box-sizing:border-box;"></div>
<div class="a" style="left:12px;top:536px;width:275px;height:30px;background:#f0f0f0;border:1px solid #fff;box-sizing:border-box;"></div>
<div class="a" style="left:288px;top:536px;width:204px;height:30px;background:#f0f0f0;border:1px solid #fff;box-sizing:border-box;"></div>
<div class="a" style="left:493px;top:536px;width:128px;height:30px;background:#f0f0f0;border:1px solid #fff;box-sizing:border-box;"></div>
<div class="a" style="left:622px;top:536px;width:198px;height:30px;background:#f0f0f0;border:1px solid #fff;box-sizing:border-box;"></div>
<div class="a" style="left:821px;top:536px;width:358px;height:30px;background:#f0f0f0;border:1px solid #fff;box-sizing:border-box;"></div>
<div class="a" style="left:1180px;top:536px;width:319px;height:30px;background:#f0f0f0;border:1px solid #fff;box-sizing:border-box;"></div>
<div class="a" style="left:1500px;top:536px;width:189px;height:30px;background:#f0f0f0;border:1px solid #fff;box-sizing:border-box;"></div>
<div class="a" style="left:287px;top:536px;width:1px;height:30px;background:#c9c9c9;"></div>
<div class="a" style="left:492px;top:536px;width:1px;height:30px;background:#c9c9c9;"></div>
<div class="a" style="left:621px;top:536px;width:1px;height:30px;background:#c9c9c9;"></div>
<div class="a" style="left:820px;top:536px;width:1px;height:30px;background:#c9c9c9;"></div>
<div class="a" style="left:1179px;top:536px;width:1px;height:30px;background:#c9c9c9;"></div>
<div class="a" style="left:1499px;top:536px;width:1px;height:30px;background:#c9c9c9;"></div>
<div class="a" style="left:12px;top:566px;width:1677px;height:1px;background:#cbcbcb;"></div>
<div class="t " style="left:20.40px;top:542.63px;font-size:12.6px;line-height:16px;color:#4d4d4d;letter-spacing:0.037px;">Сотрудник</div>
<div class="t " style="left:295.80px;top:542.63px;font-size:12.6px;line-height:16px;color:#4d4d4d;letter-spacing:0.100px;">Подразделение</div>
<div class="t " style="left:500.90px;top:542.63px;font-size:12.6px;line-height:16px;color:#4d4d4d;letter-spacing:0.075px;">Месяц</div>
<div class="t " style="left:630.20px;top:542.63px;font-size:12.6px;line-height:16px;color:#4d4d4d;letter-spacing:0.086px;">Статья расходов</div>
<div class="t " style="left:828.80px;top:542.63px;font-size:12.6px;line-height:16px;color:#4d4d4d;letter-spacing:0.106px;">Документ-основание</div>
<div class="t " style="left:1188.20px;top:542.63px;font-size:12.6px;line-height:16px;color:#4d4d4d;letter-spacing:0.289px;">Вид дохода</div>
<div class="t " style="left:1508.00px;top:542.63px;font-size:12.6px;line-height:16px;color:#4d4d4d;letter-spacing:0.037px;">К выплате</div>
<div class="a" style="left:12px;top:567px;width:1677px;height:28px;background:#fdf1c6;border:1px solid #fff;border-left:0;border-right:0;box-sizing:border-box;"></div>
<div class="a" style="left:287px;top:567px;width:1px;height:28px;background:#ffffff;"></div>
<div class="a" style="left:492px;top:567px;width:1px;height:28px;background:#ffffff;"></div>
<div class="a" style="left:621px;top:567px;width:1px;height:28px;background:#ffffff;"></div>
<div class="a" style="left:820px;top:567px;width:1px;height:28px;background:#ffffff;"></div>
<div class="a" style="left:1179px;top:567px;width:1px;height:28px;background:#ffffff;"></div>
<div class="a" style="left:1499px;top:567px;width:1px;height:28px;background:#ffffff;"></div>
<div class="a" style="left:12px;top:568px;width:275px;height:26px;background:#fde48b;border:2px solid #f6c511;box-sizing:border-box;"></div>
<div class="a" style="left:12px;top:595px;width:1677px;height:1px;background:#e6e6e6;"></div>
<div class="t " style="left:20.40px;top:573.63px;font-size:12.6px;line-height:16px;color:#333;letter-spacing:0.179px;">Васильев Евгений Владимирович</div>
<div class="t " style="left:295.80px;top:573.63px;font-size:12.6px;line-height:16px;color:#333;letter-spacing:-0.100px;">АУП</div>
<div class="t " style="left:500.90px;top:573.63px;font-size:12.6px;line-height:16px;color:#333;letter-spacing:0.080px;">Январь 2026</div>
<div class="t " style="left:630.20px;top:573.63px;font-size:12.6px;line-height:16px;color:#333;letter-spacing:-1.600px;">ОТ</div>
<div class="t " style="left:828.80px;top:573.63px;font-size:12.6px;line-height:16px;color:#333;letter-spacing:0.092px;">Командировка 7600-000005 от 15.01.2026</div>
<div class="t " style="left:1188.20px;top:573.63px;font-size:12.6px;line-height:16px;color:#333;letter-spacing:0.179px;">1 - Заработная плата и иные доходы с ограниче...</div>
<div class="t " style="left:1618.20px;top:573.63px;font-size:12.6px;line-height:16px;color:#333;letter-spacing:0.044px;">220 110,00</div>
<div class="a" style="left:12px;top:624px;width:1677px;height:1px;background:#e6e6e6;"></div>
<div class="t " style="left:20.40px;top:602.63px;font-size:12.6px;line-height:16px;color:#333;letter-spacing:0.179px;">Васильев Евгений Владимирович</div>
<div class="t " style="left:295.80px;top:602.63px;font-size:12.6px;line-height:16px;color:#333;letter-spacing:-0.100px;">АУП</div>
<div class="t " style="left:500.90px;top:602.63px;font-size:12.6px;line-height:16px;color:#333;letter-spacing:0.080px;">Январь 2026</div>
<div class="t " style="left:630.20px;top:602.63px;font-size:12.6px;line-height:16px;color:#333;letter-spacing:-1.600px;">ОТ</div>
<div class="t " style="left:828.80px;top:602.63px;font-size:12.6px;line-height:16px;color:#333;letter-spacing:0.123px;">Начисление зарплаты и взносов 7600-000002 от 27.01....</div>
<div class="t " style="left:1188.20px;top:602.63px;font-size:12.6px;line-height:16px;color:#333;letter-spacing:0.179px;">1 - Заработная плата и иные доходы с ограниче...</div>
<div class="t " style="left:1618.20px;top:602.63px;font-size:12.6px;line-height:16px;color:#333;letter-spacing:-0.067px;">137 010,00</div>
<div class="a" style="left:12px;top:653px;width:1677px;height:1px;background:#e6e6e6;"></div>
<div class="t " style="left:20.40px;top:631.63px;font-size:12.6px;line-height:16px;color:#333;letter-spacing:0.179px;">Васильев Евгений Владимирович</div>
<div class="t " style="left:295.80px;top:631.63px;font-size:12.6px;line-height:16px;color:#333;letter-spacing:-0.100px;">АУП</div>
<div class="t " style="left:500.90px;top:631.63px;font-size:12.6px;line-height:16px;color:#333;letter-spacing:0.080px;">Январь 2026</div>
<div class="t " style="left:630.20px;top:631.63px;font-size:12.6px;line-height:16px;color:#333;letter-spacing:-1.600px;">ОТ</div>
<div class="t " style="left:828.80px;top:631.63px;font-size:12.6px;line-height:16px;color:#333;letter-spacing:0.123px;">Начисление зарплаты и взносов 7600-000006 от 31.01....</div>
<div class="t " style="left:1188.20px;top:631.63px;font-size:12.6px;line-height:16px;color:#333;letter-spacing:0.179px;">1 - Заработная плата и иные доходы с ограниче...</div>
<div class="t " style="left:1627.00px;top:631.63px;font-size:12.6px;line-height:16px;color:#ff0000;letter-spacing:0.075px;">-5 000,00</div>
<div class="a" style="left:12px;top:682px;width:1677px;height:1px;background:#e6e6e6;"></div>
<div class="t " style="left:20.40px;top:660.63px;font-size:12.6px;line-height:16px;color:#333;letter-spacing:0.179px;">Васильев Евгений Владимирович</div>
<div class="t " style="left:295.80px;top:660.63px;font-size:12.6px;line-height:16px;color:#333;letter-spacing:-0.100px;">АУП</div>
<div class="t " style="left:500.90px;top:660.63px;font-size:12.6px;line-height:16px;color:#333;letter-spacing:0.136px;">Февраль 2026</div>
<div class="t " style="left:630.20px;top:660.63px;font-size:12.6px;line-height:16px;color:#333;letter-spacing:-1.600px;">ОТ</div>
<div class="t " style="left:828.80px;top:660.63px;font-size:12.6px;line-height:16px;color:#333;letter-spacing:0.123px;">Начисление зарплаты и взносов 7600-000003 от 27.01....</div>
<div class="t " style="left:1188.20px;top:660.63px;font-size:12.6px;line-height:16px;color:#333;letter-spacing:0.179px;">1 - Заработная плата и иные доходы с ограниче...</div>
<div class="t " style="left:1618.20px;top:660.63px;font-size:12.6px;line-height:16px;color:#333;letter-spacing:-0.067px;">130 500,00</div>
<div class="a" style="left:12px;top:711px;width:1677px;height:1px;background:#e6e6e6;"></div>
<div class="t " style="left:20.40px;top:689.63px;font-size:12.6px;line-height:16px;color:#333;letter-spacing:0.179px;">Васильев Евгений Владимирович</div>
<div class="t " style="left:295.80px;top:689.63px;font-size:12.6px;line-height:16px;color:#333;letter-spacing:-0.100px;">АУП</div>
<div class="t " style="left:500.90px;top:689.63px;font-size:12.6px;line-height:16px;color:#333;letter-spacing:0.136px;">Февраль 2026</div>
<div class="t " style="left:630.20px;top:689.63px;font-size:12.6px;line-height:16px;color:#333;letter-spacing:-1.600px;">ОТ</div>
<div class="t " style="left:828.80px;top:689.63px;font-size:12.6px;line-height:16px;color:#333;letter-spacing:0.123px;">Начисление зарплаты и взносов 7600-000007 от 04.02....</div>
<div class="t " style="left:1188.20px;top:689.63px;font-size:12.6px;line-height:16px;color:#333;letter-spacing:0.179px;">1 - Заработная плата и иные доходы с ограниче...</div>
<div class="t " style="left:1652.00px;top:689.63px;font-size:12.6px;line-height:16px;color:#ff0000;letter-spacing:-0.100px;">-1,00</div>
<div class="a" style="left:12px;top:740px;width:1677px;height:1px;background:#e6e6e6;"></div>
<div class="t " style="left:20.40px;top:718.63px;font-size:12.6px;line-height:16px;color:#333;letter-spacing:0.179px;">Васильев Евгений Владимирович</div>
<div class="t " style="left:295.80px;top:718.63px;font-size:12.6px;line-height:16px;color:#333;letter-spacing:-0.100px;">АУП</div>
<div class="t " style="left:500.90px;top:718.63px;font-size:12.6px;line-height:16px;color:#333;letter-spacing:0.136px;">Февраль 2026</div>
<div class="t " style="left:630.20px;top:718.63px;font-size:12.6px;line-height:16px;color:#333;letter-spacing:-1.600px;">ОТ</div>
<div class="t " style="left:828.80px;top:718.63px;font-size:12.6px;line-height:16px;color:#333;letter-spacing:0.084px;">Отпуск 7600-000004 от 06.02.2026</div>
<div class="t " style="left:1188.20px;top:718.63px;font-size:12.6px;line-height:16px;color:#333;letter-spacing:0.179px;">1 - Заработная плата и иные доходы с ограниче...</div>
<div class="t " style="left:1624.50px;top:718.63px;font-size:12.6px;line-height:16px;color:#333;letter-spacing:0.013px;">10 244,74</div>
<div class="a" style="left:12px;top:769px;width:1677px;height:1px;background:#e6e6e6;"></div>
<div class="t " style="left:20.40px;top:747.63px;font-size:12.6px;line-height:16px;color:#333;letter-spacing:0.179px;">Васильев Евгений Владимирович</div>
<div class="t " style="left:295.80px;top:747.63px;font-size:12.6px;line-height:16px;color:#333;letter-spacing:-0.100px;">АУП</div>
<div class="t " style="left:500.90px;top:747.63px;font-size:12.6px;line-height:16px;color:#333;letter-spacing:0.136px;">Февраль 2026</div>
<div class="t " style="left:630.20px;top:747.63px;font-size:12.6px;line-height:16px;color:#333;letter-spacing:-1.600px;">ОТ</div>
<div class="t " style="left:828.80px;top:747.63px;font-size:12.6px;line-height:16px;color:#333;letter-spacing:0.084px;">Отпуск 7600-000005 от 09.02.2026</div>
<div class="t " style="left:1188.20px;top:747.63px;font-size:12.6px;line-height:16px;color:#333;letter-spacing:0.179px;">1 - Заработная плата и иные доходы с ограниче...</div>
<div class="t " style="left:1624.50px;top:747.63px;font-size:12.6px;line-height:16px;color:#333;letter-spacing:0.013px;">81 952,92</div>
<div class="a" style="left:1453px;top:787px;width:46px;height:26px;background:linear-gradient(#ffe84a,#f2d000);border:1px solid #c9a900;border-bottom-color:#a88c00;border-radius:3px;box-shadow:0 1px 1px rgba(0,0,0,.25);box-sizing:border-box;"></div>
<div class="t " style="left:1467.00px;top:793.43px;font-size:13.2px;line-height:16px;color:#333;font-weight:bold;">OK</div>
<div class="a" style="left:1508px;top:787px;width:73px;height:26px;background:linear-gradient(#ffffff 40%,#ececec);border:1px solid #c4c4c4;border-bottom-color:#a6a6a6;border-radius:3px;box-shadow:0 1px 1px rgba(0,0,0,.18);box-sizing:border-box;"></div>
<div class="t " style="left:1522.00px;top:792.63px;font-size:12.6px;line-height:16px;color:#333;">Отмена</div>
<div class="a" style="left:1590px;top:787px;width:61px;height:26px;background:linear-gradient(#ffffff 40%,#ececec);border:1px solid #c4c4c4;border-bottom-color:#a6a6a6;border-radius:3px;box-shadow:0 1px 1px rgba(0,0,0,.18);box-sizing:border-box;"></div>
<div class="t " style="left:1604.50px;top:792.63px;font-size:12.6px;line-height:16px;color:#333;letter-spacing:-0.500px;">Еще</div>
<svg class="a" style="left:1638px;top:801px;" width="5" height="3" viewBox="0 0 5 3"><path d="M0 0H5L2.5 3Z" fill="#444"/></svg>
<div class="a" style="left:1660px;top:787px;width:30px;height:26px;background:linear-gradient(#ffffff 40%,#ececec);border:1px solid #c4c4c4;border-bottom-color:#a6a6a6;border-radius:3px;box-shadow:0 1px 1px rgba(0,0,0,.18);box-sizing:border-box;"></div>
<div class="t " style="left:1671.60px;top:790.96px;font-size:16px;line-height:20px;color:#111;-webkit-text-stroke:0.4px #111;">?</div>
<svg class="a" style="left:0px;top:0px;" width="1757" height="987" viewBox="0 0 1757 987"><defs><filter id="sh487" x="-10%" y="-200%" width="120%" height="500%"><feGaussianBlur in="SourceAlpha" stdDeviation="1.3"/><feOffset dx="1" dy="2.5"/><feComponentTransfer><feFuncA type="linear" slope="0.75"/></feComponentTransfer><feMerge><feMergeNode/><feMergeNode in="SourceGraphic"/></feMerge></filter></defs><path d="M487.5 562.3L614.5 562.8" stroke="#ff3b3b" stroke-width="3" stroke-linecap="round" filter="url(#sh487)"/></svg>
<svg class="a" style="left:0px;top:0px;" width="1757" height="987" viewBox="0 0 1757 987"><defs><filter id="sh821" x="-10%" y="-200%" width="120%" height="500%"><feGaussianBlur in="SourceAlpha" stdDeviation="1.3"/><feOffset dx="1" dy="2.5"/><feComponentTransfer><feFuncA type="linear" slope="0.75"/></feComponentTransfer><feMerge><feMergeNode/><feMergeNode in="SourceGraphic"/></feMerge></filter></defs><path d="M821 564.3L1013.5 565.8" stroke="#ff3b3b" stroke-width="3" stroke-linecap="round" filter="url(#sh821)"/></svg>
<svg class="a" style="left:0px;top:0px;" width="1757" height="987" viewBox="0 0 1757 987"><defs><filter id="sh1501" x="-10%" y="-200%" width="120%" height="500%"><feGaussianBlur in="SourceAlpha" stdDeviation="1.3"/><feOffset dx="1" dy="2.5"/><feComponentTransfer><feFuncA type="linear" slope="0.75"/></feComponentTransfer><feMerge><feMergeNode/><feMergeNode in="SourceGraphic"/></feMerge></filter></defs><path d="M1501.5 564.3L1588 565.3" stroke="#ff3b3b" stroke-width="3" stroke-linecap="round" filter="url(#sh1501)"/></svg>
<svg class="a" style="left:0px;top:0px;" width="1757" height="987" viewBox="0 0 1757 987"><defs><filter id="sha" x="-100%" y="-20%" width="300%" height="150%"><feGaussianBlur in="SourceAlpha" stdDeviation="1.5"/><feOffset dx="2" dy="2"/><feComponentTransfer><feFuncA type="linear" slope="0.5"/></feComponentTransfer><feMerge><feMergeNode/><feMergeNode in="SourceGraphic"/></feMerge></filter></defs><g filter="url(#sha)"><path d="M798 435L791.5 461" stroke="#ff3b3b" stroke-width="3.2" stroke-linecap="round"/><path d="M785 459.5L788.3 471.5L796.8 462.3Z" fill="#ff3b3b" stroke="#ff3b3b" stroke-width="0.8" stroke-linejoin="round"/></g></svg>
</body></html>
